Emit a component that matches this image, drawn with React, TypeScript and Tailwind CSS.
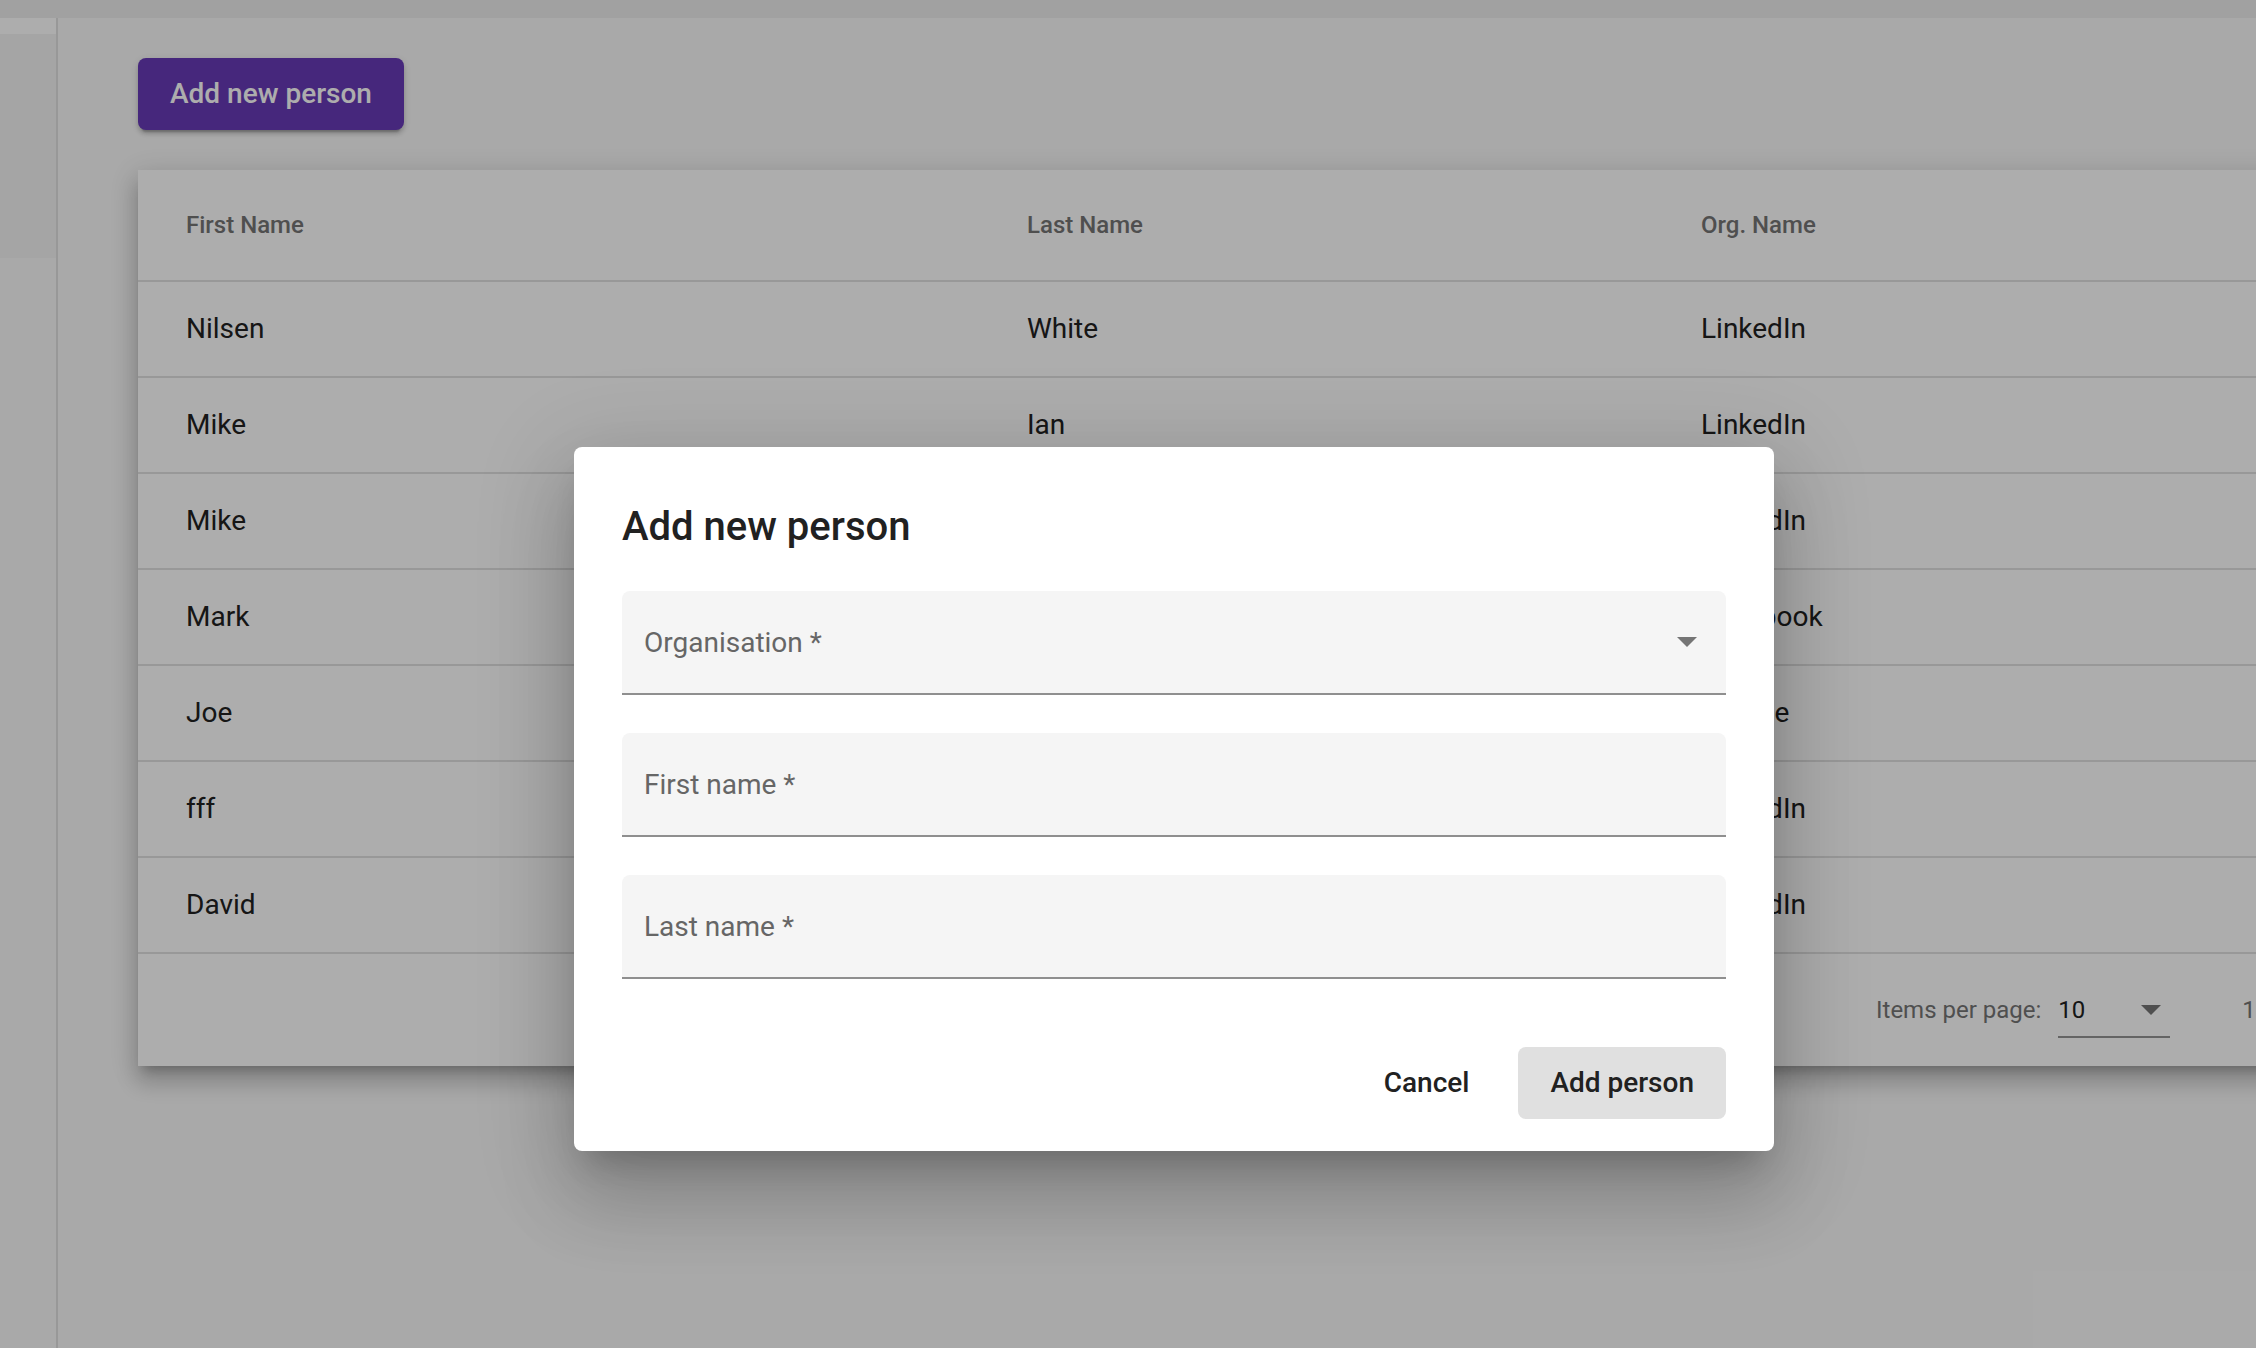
import React from "react";

const rows = [
  ["Nilsen", "White", "LinkedIn"],
  ["Mike", "Ian", "LinkedIn"],
  ["Mike", "Ross", "LinkedIn"],
  ["Mark", "Zuckerberg", "Facebook"],
  ["Joe", "Smith", "Google"],
  ["fff", "fff", "LinkedIn"],
  ["David", "Brown", "LinkedIn"],
];

function Caret({ color = "#757575" }: { color?: string }) {
  return (
    <svg width="20" height="10" viewBox="0 0 20 10">
      <polygon points="0,0 20,0 10,10" fill={color} />
    </svg>
  );
}

function Field({ label, select }: { label: string; select?: boolean }) {
  return (
    <div className="h-[104px] bg-[#f5f5f5] rounded-t-[8px] border-b-2 border-[#8f8f8f] flex items-center pl-[22px] pr-[29px]">
      <span className="flex-1 text-[28px] text-[#666666] leading-none pt-[2px]">{label}</span>
      {select && <Caret />}
    </div>
  );
}

export default function App() {
  return (
    <div className="relative w-[2256px] h-[1348px] overflow-hidden bg-[#fafafa] font-['Roboto',sans-serif] flex flex-col">
      <div className="h-[18px] bg-[#eeeeee] shrink-0" />
      <div className="flex flex-1 min-h-0">
        <aside className="w-[58px] shrink-0 border-r-2 border-[#e1e1e1] flex flex-col">
          <div className="h-[16px] bg-white" />
          <div className="h-[224px] bg-[#f4f4f4]" />
        </aside>
        <main className="flex-1 min-w-0 pl-[80px] pt-[40px]">
          <button className="h-[72px] px-[32px] rounded-[8px] bg-[#673ab7] text-white text-[28px] font-medium shadow-[0_6px_2px_-4px_rgba(0,0,0,0.2),0_4px_4px_0_rgba(0,0,0,0.14),0_2px_10px_0_rgba(0,0,0,0.12)]">
            Add new person
          </button>
          <div className="mt-[40px] w-[2300px] bg-white shadow-[0_10px_10px_-6px_rgba(0,0,0,0.2),0_16px_20px_2px_rgba(0,0,0,0.14),0_6px_28px_5px_rgba(0,0,0,0.12)]">
            <div className="h-[112px] border-b-2 border-[#e0e0e0] grid grid-cols-[841px_674px_1fr] items-center pl-[48px] text-[24px] font-medium text-[#757575]">
              <div>First Name</div>
              <div>Last Name</div>
              <div>Org. Name</div>
            </div>
            {rows.map((r, i) => (
              <div
                key={i}
                className="h-[96px] border-b-2 border-[#e0e0e0] grid grid-cols-[841px_674px_1fr] items-center pl-[48px] text-[28px] text-[#212121]"
              >
                <div>{r[0]}</div>
                <div>{r[1]}</div>
                <div>{r[2]}</div>
              </div>
            ))}
            <div className="h-[112px] flex items-center pl-[1738px] text-[24px] text-[#757575]">
              <span>Items per page:</span>
              <div className="ml-[17px] w-[112px] h-[56px] border-b-2 border-[#949494] flex items-center justify-between pr-[9px] pt-[2px]">
                <span className="text-[#212121]">10</span>
                <Caret />
              </div>
              <span className="ml-[72px]">1 – 7 of 7</span>
            </div>
          </div>
        </main>
      </div>

      <div className="absolute inset-0 bg-[rgba(0,0,0,0.32)]" />

      <div className="absolute left-[574px] top-[447px] w-[1200px] bg-white rounded-[8px] px-[48px] pt-[48px] pb-[32px] shadow-[0_22px_30px_-14px_rgba(0,0,0,0.2),0_48px_76px_6px_rgba(0,0,0,0.14),0_18px_92px_16px_rgba(0,0,0,0.12)]">
        <h2 className="text-[40px] leading-[64px] font-medium text-[#212121]">Add new person</h2>
        <div className="mt-[32px] flex flex-col gap-[38px]">
          <Field label="Organisation *" select />
          <Field label="First name *" />
          <Field label="Last name *" />
        </div>
        <div className="mt-[68px] flex justify-end gap-[17px]">
          <button className="h-[72px] px-[32px] rounded-[8px] text-[28px] font-medium text-[#212121]">Cancel</button>
          <button className="h-[72px] px-[32px] rounded-[8px] bg-[#e0e0e0] text-[28px] font-medium text-[#212121]">
            Add person
          </button>
        </div>
      </div>
    </div>
  );
}
